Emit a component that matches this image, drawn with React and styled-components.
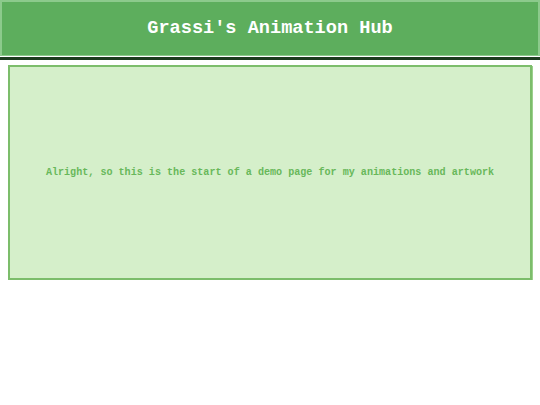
import React from "react";
import styled, { createGlobalStyle } from "styled-components";

const Global = createGlobalStyle`
  html, body { margin: 0; padding: 0; background: #ffffff; }
  body { font-family: "Liberation Mono", "Courier New", monospace; }
`;

const Page = styled.div`
  display: flex;
  flex-direction: column;
  width: 540px;
`;

const Header = styled.header`
  height: 53px;
  background: #5dae5d;
  border: 2px solid #8cca8c;
  border-bottom-width: 1px;
  display: flex;
  align-items: center;
  justify-content: center;
  box-sizing: content-box;
  width: 536px;
`;

const Title = styled.h1`
  margin: 0;
  font-family: "Liberation Mono", "Courier New", monospace;
  font-weight: bold;
  font-size: 18.6px;
  color: #ffffff;
  letter-spacing: 0;
`;

const Divider = styled.div`
  height: 3px;
  margin-top: 1px;
  background: #1d3b1f;
`;

const Main = styled.main`
  padding: 5px 8px 0 8px;
`;

const Card = styled.section`
  height: 211px;
  background: #d5efca;
  border: 2px solid #7cbd6b;
  box-shadow: 1px 1px 0 #9ccf8d;
  display: flex;
  align-items: center;
  justify-content: center;
`;

const Intro = styled.p`
  margin: 0;
  font-family: "Liberation Mono", "Courier New", monospace;
  font-weight: bold;
  font-size: 10.1px;
  color: #68b85a;
`;

export default function App() {
  return (
    <>
      <Global />
      <Page>
        <Header>
          <Title>Grassi's Animation Hub</Title>
        </Header>
        <Divider />
        <Main>
          <Card>
            <Intro>Alright, so this is the start of a demo page for my animations and artwork</Intro>
          </Card>
        </Main>
      </Page>
    </>
  );
}
